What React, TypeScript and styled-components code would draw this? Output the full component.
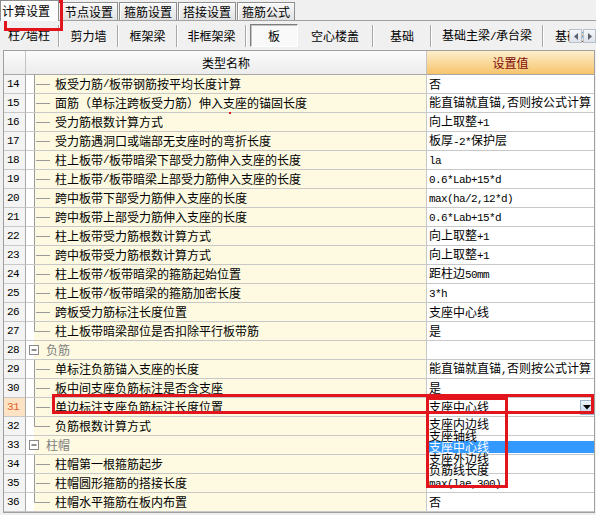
import React from "react"
import styled, { createGlobalStyle } from "styled-components"

const GlobalStyle = createGlobalStyle`
  html, body {
    margin: 0;
    padding: 0;
    background: #f0f0f0;
  }
  body {
    width: 596px;
    height: 515px;
    overflow: hidden;
    font-family: "Noto Sans CJK SC", "Noto Sans", sans-serif;
    font-size: 12px;
    color: #000;
  }
`

const Page = styled.div`
  position: relative;
  width: 596px;
  height: 515px;
`

const TabStrip = styled.div`
  display: flex;
  align-items: flex-end;
  gap: 1px;
  height: 20px;
`

const Tab = styled.div<{ $active?: boolean; $w: number }>`
  position: relative;
  z-index: ${p => (p.$active ? 1 : 0)};
  flex: none;
  width: ${p => p.$w}px;
  height: ${p => (p.$active ? 21 : 18)}px;
  margin-bottom: ${p => (p.$active ? -1 : 0)}px;
  box-sizing: border-box;
  border: 1px solid #8e8e8e;
  border-bottom: 0;
  box-shadow: inset 1px 1px 0 #fff;
  background: ${p => (p.$active ? "#fcfcfc" : "linear-gradient(#f8f8f8, #e2e2e2)")};
  padding-left: ${p => (p.$active ? 1 : 0)}px;
  text-align: ${p => (p.$active ? "left" : "center")};
  line-height: ${p => (p.$active ? 19 : 17)}px;
  white-space: nowrap;
`

const SubBar = styled.div`
  position: relative;
  display: flex;
  align-items: center;
  height: 30px;
  box-sizing: border-box;
  border-top: 1px solid #a0a0a0;
  overflow: hidden;
  white-space: nowrap;
`

const SubItem = styled.div<{ $w: number }>`
  flex: none;
  width: ${p => p.$w}px;
  text-align: center;
  line-height: 18px;
`

const ActiveItem = styled.div`
  flex: none;
  width: 48px;
  height: 23px;
  margin-left: 3px;
  box-sizing: border-box;
  border: 1px solid;
  border-color: #7c7c7c #fff #fff #7c7c7c;
  box-shadow: inset 1px 1px 0 #c4c4c4;
  background: #f9f9f9;
  text-align: center;
  line-height: 21px;
`

const Sep = styled.div`
  flex: none;
  width: 2px;
  height: 22px;
  box-sizing: border-box;
  border-left: 1px solid #a6a6a6;
  border-right: 1px solid #fff;
`

const ScrollBtns = styled.div`
  position: absolute;
  right: 0;
  top: 8px;
  display: flex;
  gap: 1px;
`

const ScrollBtn = styled.div`
  width: 13px;
  height: 14px;
  box-sizing: border-box;
  border: 1px solid #b8c0cc;
  background: linear-gradient(#f4f6f9, #dde3ea);
  display: flex;
  align-items: center;
  justify-content: center;
`

const Table = styled.div`
  margin: 0 0 0 3px;
  width: 592px;
  box-sizing: border-box;
  border: 1px solid #a0a0a0;
  background: #fff;
`

const Row = styled.div<{ $h?: number }>`
  display: grid;
  grid-template-columns: 22px 401px 167px;
  height: ${p => p.$h ?? 19}px;
`

const HeadCell = styled.div<{ $accent?: boolean; $last?: boolean }>`
  box-sizing: border-box;
  border-right: ${p => (p.$last ? "0" : "1px solid #c4c4c4")};
  border-bottom: 1px solid #a8a8a8;
  background: ${p =>
    p.$accent ? "linear-gradient(#fdeecb, #f6c46c)" : "linear-gradient(#fbfbfb, #ececec)"};
  color: ${p => (p.$accent ? "#7c0a0a" : "#000")};
  text-align: center;
  line-height: 23px;
`

const NumCell = styled.div<{ $current?: boolean }>`
  box-sizing: border-box;
  border-right: 1px solid #a8a8a8;
  border-bottom: 1px solid #c8c8c8;
  background: ${p => (p.$current ? "#fde2c4" : "#f4f4f4")};
  color: ${p => (p.$current ? "#e0602a" : "#000")};
  padding-left: 3px;
  font-family: "Liberation Mono", monospace;
  font-size: 11px;
  letter-spacing: -0.6px;
  line-height: 18px;
`

const NameCell = styled.div<{ $group?: boolean }>`
  display: flex;
  align-items: center;
  box-sizing: border-box;
  border-right: 1px solid #c8c8c8;
  border-bottom: 1px solid #c8c8c8;
  background: linear-gradient(to right, #fff 8px, #fdfae1 8px);
  color: ${p => (p.$group ? "#808080" : "#000")};
  line-height: 18px;
  white-space: nowrap;
  overflow: hidden;
`

const ValueCell = styled.div`
  display: flex;
  align-items: center;
  justify-content: space-between;
  box-sizing: border-box;
  border-bottom: 1px solid #c8c8c8;
  padding-left: 2px;
  line-height: 18px;
  white-space: nowrap;
  overflow: hidden;
`

const TreeSvg = styled.svg`
  flex: none;
  display: block;
`

const DropBtn = styled.div`
  flex: none;
  width: 14px;
  height: 15px;
  box-sizing: border-box;
  border: 1px solid #9fb3cc;
  background: linear-gradient(#eef3fa, #c5d4e8);
  display: flex;
  align-items: center;
  justify-content: center;
`

const DropList = styled.div`
  position: absolute;
  left: 426px;
  top: 418px;
  width: 168px;
`

const DropItem = styled.div<{ $sel?: boolean }>`
  height: 11.5px;
  line-height: 11.5px;
  padding-left: 3px;
  white-space: nowrap;
  background: ${p => (p.$sel ? "#3399ff" : "transparent")};
  color: ${p => (p.$sel ? "#fff" : "#000")};
`

const Ascii = styled.span`
  font-family: "Liberation Mono", monospace;
  font-size: 11px;
  letter-spacing: -0.6px;
`

const RedBox = styled.div`
  position: absolute;
  box-sizing: border-box;
  border: 3px solid #e2141c;
  pointer-events: none;
`

const RedDot = styled.div`
  position: absolute;
  left: 229px;
  top: 112px;
  width: 2px;
  height: 2px;
  background: #e2141c;
`

const mixed = (s: string) =>
  s.split(/([\x20-\x7e]+)/).map((part, i) =>
    /^[\x20-\x7e]+$/.test(part) ? <Ascii key={i}>{part}</Ascii> : part
  )

type Kind = "mid" | "last" | "group"

interface Item {
  no: number
  name: string
  value?: string
  kind: Kind
}

const rows: Item[] = [
  { no: 14, name: "板受力筋/板带钢筋按平均长度计算", value: "否", kind: "mid" },
  { no: 15, name: "面筋（单标注跨板受力筋）伸入支座的锚固长度", value: "能直锚就直锚,否则按公式计算", kind: "mid" },
  { no: 16, name: "受力筋根数计算方式", value: "向上取整+1", kind: "mid" },
  { no: 17, name: "受力筋遇洞口或端部无支座时的弯折长度", value: "板厚-2*保护层", kind: "mid" },
  { no: 18, name: "柱上板带/板带暗梁下部受力筋伸入支座的长度", value: "la", kind: "mid" },
  { no: 19, name: "柱上板带/板带暗梁上部受力筋伸入支座的长度", value: "0.6*Lab+15*d", kind: "mid" },
  { no: 20, name: "跨中板带下部受力筋伸入支座的长度", value: "max(ha/2,12*d)", kind: "mid" },
  { no: 21, name: "跨中板带上部受力筋伸入支座的长度", value: "0.6*Lab+15*d", kind: "mid" },
  { no: 22, name: "柱上板带受力筋根数计算方式", value: "向上取整+1", kind: "mid" },
  { no: 23, name: "跨中板带受力筋根数计算方式", value: "向上取整+1", kind: "mid" },
  { no: 24, name: "柱上板带/板带暗梁的箍筋起始位置", value: "距柱边50mm", kind: "mid" },
  { no: 25, name: "柱上板带/板带暗梁的箍筋加密长度", value: "3*h", kind: "mid" },
  { no: 26, name: "跨板受力筋标注长度位置", value: "支座中心线", kind: "mid" },
  { no: 27, name: "柱上板带暗梁部位是否扣除平行板带筋", value: "是", kind: "last" },
  { no: 28, name: "负筋", kind: "group" },
  { no: 29, name: "单标注负筋锚入支座的长度", value: "能直锚就直锚,否则按公式计算", kind: "mid" },
  { no: 30, name: "板中间支座负筋标注是否含支座", value: "是", kind: "mid" },
  { no: 31, name: "单边标注支座负筋标注长度位置", value: "支座中心线", kind: "mid" },
  { no: 32, name: "负筋根数计算方式", kind: "last" },
  { no: 33, name: "柱帽", kind: "group" },
  { no: 34, name: "柱帽第一根箍筋起步", kind: "mid" },
  { no: 35, name: "柱帽圆形箍筋的搭接长度", value: "max(lae,300)", kind: "mid" },
  { no: 36, name: "柱帽水平箍筋在板内布置", value: "否", kind: "last" },
]

const options = ["支座内边线", "支座轴线", "支座中心线", "支座外边线", "负筋线长度"]

const Tree = ({ kind }: { kind: Kind }) =>
  kind === "group" ? (
    <TreeSvg width={20} height={18}>
      <rect x={3.5} y={4.5} width={9} height={9} fill="#fff" stroke="#8a8a8a" />
      <line x1={5.5} x2={10.5} y1={9} y2={9} stroke="#222" />
    </TreeSvg>
  ) : (
    <TreeSvg width={29} height={18}>
      <line x1={8.5} x2={8.5} y1={0} y2={kind === "last" ? 9.5 : 18} stroke="#9a9a9a" />
      <line x1={kind === "last" ? 8.5 : 10} x2={24} y1={9.5} y2={9.5} stroke="#9a9a9a" />
    </TreeSvg>
  )

const Arrow = ({ dir }: { dir: "left" | "right" | "down" }) => {
  if (dir === "down")
    return (
      <svg width={8} height={5}>
        <path d="M0 0 H8 L4 4.5 Z" fill="#000" />
      </svg>
    )
  return (
    <svg width={4} height={7}>
      <path d={dir === "left" ? "M4 0 V7 L0 3.5 Z" : "M0 0 V7 L4 3.5 Z"} fill="#5a6270" />
    </svg>
  )
}

const tabs = ["节点设置", "箍筋设置", "搭接设置", "箍筋公式"]

export default function App() {
  return (
    <>
      <GlobalStyle />
      <Page>
        <TabStrip>
          <Tab $active $w={59}>计算设置</Tab>
          {tabs.map(t => (
            <Tab key={t} $w={58}>{t}</Tab>
          ))}
        </TabStrip>

        <SubBar>
          <SubItem $w={58}>{mixed("柱/墙柱")}</SubItem>
          <Sep />
          <SubItem $w={57}>剪力墙</SubItem>
          <Sep />
          <SubItem $w={57}>框架梁</SubItem>
          <Sep />
          <SubItem $w={67}>非框架梁</SubItem>
          <Sep />
          <ActiveItem>板</ActiveItem>
          <SubItem $w={74}>空心楼盖</SubItem>
          <Sep />
          <SubItem $w={56}>基础</SubItem>
          <Sep />
          <SubItem $w={110}>{mixed("基础主梁/承台梁")}</SubItem>
          <Sep />
          <SubItem $w={70}>基础次梁</SubItem>
          <ScrollBtns>
            <ScrollBtn><Arrow dir="left" /></ScrollBtn>
            <ScrollBtn><Arrow dir="right" /></ScrollBtn>
          </ScrollBtns>
        </SubBar>

        <Table>
          <Row $h={24}>
            <HeadCell />
            <HeadCell>类型名称</HeadCell>
            <HeadCell $accent $last>设置值</HeadCell>
          </Row>
          {rows.map(r => (
            <Row key={r.no}>
              <NumCell $current={r.no === 31}>{r.no}</NumCell>
              <NameCell $group={r.kind === "group"}>
                <Tree kind={r.kind} />
                {mixed(r.name)}
              </NameCell>
              <ValueCell>
                <span>{r.value ? mixed(r.value) : null}</span>
                {r.no === 31 && (
                  <DropBtn>
                    <Arrow dir="down" />
                  </DropBtn>
                )}
              </ValueCell>
            </Row>
          ))}
        </Table>

        <DropList>
          {options.map(o => (
            <DropItem key={o} $sel={o === "支座中心线"}>{o}</DropItem>
          ))}
        </DropList>

        <RedDot />
        <RedBox style={{ left: 4, top: 0, width: 59, height: 31 }} />
        <RedBox style={{ left: 52, top: 394, width: 542, height: 20 }} />
        <RedBox style={{ left: 426, top: 397, width: 82, height: 91 }} />
      </Page>
    </>
  )
}
